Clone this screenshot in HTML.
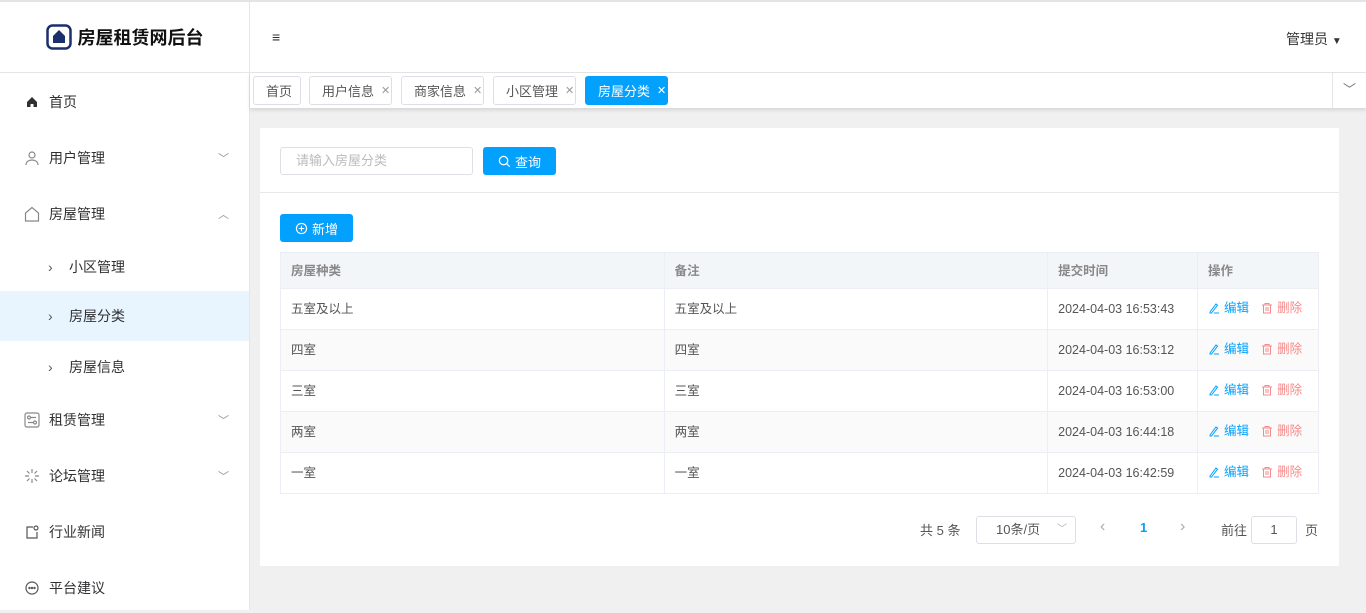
<!DOCTYPE html>
<html><head><meta charset="utf-8"><style>
*{box-sizing:border-box;margin:0;padding:0}
body{width:1366px;height:610px;overflow:hidden;background:#f0f0f0;font-family:"Liberation Sans","Noto Sans CJK SC",sans-serif;font-size:13px;color:#333;position:relative}
.abs{position:absolute}
#top{left:0;top:0;width:1366px;height:2px;background:#e4e4e4}
#side{left:0;top:2px;width:250px;height:608px;background:#fff;border-right:1px solid #e6e6e6}
#logo{left:0;top:2px;width:249px;height:71px;border-bottom:1px solid #e6e6e6;display:flex;align-items:center;justify-content:center;font-size:18px;font-weight:bold;color:#111}
.mi{position:absolute;left:0;width:249px;height:50px;display:flex;align-items:center;font-size:14px;color:#303133}
.mi .ic{position:absolute;left:24px;width:16px;height:16px}
.mi .t{position:absolute;left:49px}
.mi .ar{position:absolute;left:218px;font-size:11px;color:#909399}
.sub .t{left:69px}
.sub .ch{position:absolute;left:48px;color:#555}
#hdr{left:250px;top:2px;width:1116px;height:71px;background:#fff;border-bottom:1px solid #e6e6e6}
#tags{left:250px;top:73px;width:1116px;height:35px;background:#fff;box-shadow:0 2px 4px rgba(0,0,0,.12)}
.tag{position:absolute;top:3px;height:29px;width:83px;border:1px solid #dcdfe6;border-radius:3px;font-size:13px;color:#555;display:flex;align-items:center;padding:0 0 0 12px}
.tag .x{margin-left:7px;font-size:11px;color:#999}
.tag.on{background:#03a1fe;border-color:#03a1fe;color:#fff}
.tag.on .x{color:#fff}
#card{left:260px;top:128px;width:1079px;height:438px;background:#fff}
.btn{position:absolute;background:#03a1fe;color:#fff;border-radius:3px;display:flex;align-items:center;justify-content:center;font-size:13px}
table{position:absolute;left:20px;top:124px;width:1039px;border-collapse:collapse;font-size:12.5px}
td,th{border:1px solid #ebeef5;height:41px;padding-left:10px;text-align:left;color:#555;font-weight:normal;vertical-align:middle;line-height:16px}
th{background:#f3f6f9;color:#888;font-weight:bold;height:36px}
tr:nth-child(odd) td{background:#fafafa}
.ed{color:#03a1fe;display:inline-flex;align-items:center;gap:4px}.de{color:#f78989;margin-left:12px;display:inline-flex;align-items:center;gap:4px}
</style></head><body>
<div class="abs" id="top"></div>
<div class="abs" id="side"></div>
<div class="abs" id="logo"><svg width="26" height="26" viewBox="0 0 26 26" style="margin-right:6px"><rect x="1.5" y="1.5" width="23" height="23" rx="5" fill="none" stroke="#1a2f6b" stroke-width="2.5"/><path d="M13 6 L19 12 V19 H7 V12 Z" fill="#1a2f6b"/></svg>房屋租赁网后台</div>
<div class="mi" style="top:77px"><svg class="ic" viewBox="0 0 16 16"><path d="M8 3L3 8v5h3.5v-3h3v3H13V8z" fill="#303133"/></svg><span class="t">首页</span></div>
<div class="mi" style="top:133px"><svg class="ic" viewBox="0 0 16 16" fill="none" stroke="#888" stroke-width="1.2"><circle cx="8" cy="5" r="3"/><path d="M2 15c0-3.5 3-5 6-5s6 1.5 6 5"/></svg><span class="t">用户管理</span><span class="ar">﹀</span></div>
<div class="mi" style="top:189px"><svg class="ic" viewBox="0 0 16 16" fill="none" stroke="#888" stroke-width="1.2"><path d="M8 1.5L1.5 7v8h13V7z"/></svg><span class="t">房屋管理</span><span class="ar">︿</span></div>
<div class="mi sub" style="top:242px"><span class="ch">›</span><span class="t">小区管理</span></div>
<div class="mi sub" style="top:291px;background:#e8f4fe"><span class="ch">›</span><span class="t">房屋分类</span></div>
<div class="mi sub" style="top:342px"><span class="ch">›</span><span class="t">房屋信息</span></div>
<div class="mi" style="top:395px"><svg class="ic" viewBox="0 0 16 16" fill="none" stroke="#888" stroke-width="1.2"><rect x="1" y="1" width="14" height="14" rx="2"/><circle cx="5" cy="5.5" r="1.5"/><path d="M7 5.5h5M4 10.5h5"/><circle cx="11" cy="10.5" r="1.5"/></svg><span class="t">租赁管理</span><span class="ar">﹀</span></div>
<div class="mi" style="top:451px"><svg class="ic" viewBox="0 0 16 16" stroke="#888" stroke-width="1.2"><path d="M8 1v4M8 11v4M1 8h4M11 8h4M3 3l2.5 2.5M10.5 10.5L13 13M13 3l-2.5 2.5M5.5 10.5L3 13"/></svg><span class="t">论坛管理</span><span class="ar">﹀</span></div>
<div class="mi" style="top:507px"><svg class="ic" viewBox="0 0 16 16" fill="none" stroke="#555" stroke-width="1.2"><path d="M9 3H3v11h10V8"/><circle cx="12" cy="4" r="2"/></svg><span class="t">行业新闻</span></div>
<div class="mi" style="top:563px"><svg class="ic" viewBox="0 0 16 16" fill="none" stroke="#555" stroke-width="1.2"><circle cx="8" cy="8" r="6"/><circle cx="5.5" cy="8" r=".6" fill="#555"/><circle cx="8" cy="8" r=".6" fill="#555"/><circle cx="10.5" cy="8" r=".6" fill="#555"/></svg><span class="t">平台建议</span></div>
<div class="abs" id="hdr"><span style="position:absolute;left:22px;top:27px;font-size:14px;font-weight:bold">≡</span><span style="position:absolute;left:1036px;top:27px;font-size:14px;color:#333">管理员 <span style="font-size:10px">▼</span></span></div>
<div class="abs" id="tags">
<div class="tag" style="left:3px;width:48px">首页</div>
<div class="tag" style="left:59px">用户信息<span class="x">✕</span></div>
<div class="tag" style="left:151px">商家信息<span class="x">✕</span></div>
<div class="tag" style="left:243px">小区管理<span class="x">✕</span></div>
<div class="tag on" style="left:335px">房屋分类<span class="x">✕</span></div>
<div style="position:absolute;left:1082px;top:0;width:34px;height:35px;border-left:1px solid #e6e6e6;text-align:center;line-height:33px;color:#777">﹀</div>
</div>
<div class="abs" id="card">
<div style="position:absolute;left:20px;top:19px;width:193px;height:28px;border:1px solid #dcdfe6;border-radius:3px;padding-left:15px;line-height:26px;color:#bbb;font-size:13px">请输入房屋分类</div>
<div class="btn" style="left:223px;top:19px;width:73px;height:28px"><svg width="13" height="13" viewBox="0 0 14 14" fill="none" stroke="#fff" stroke-width="1.4" style="margin-right:4px"><circle cx="6" cy="6" r="4.5"/><path d="M9.5 9.5L12.5 12.5"/></svg>查询</div>
<div style="position:absolute;left:0;top:64px;width:1079px;height:1px;background:#e8e8e8"></div>
<div class="btn" style="left:20px;top:86px;width:73px;height:28px"><svg width="13" height="13" viewBox="0 0 14 14" fill="none" stroke="#fff" stroke-width="1.2" style="margin-right:4px"><circle cx="7" cy="7" r="5.5"/><path d="M7 4v6M4 7h6"/></svg>新增</div>
<table>
<colgroup><col style="width:384px"><col style="width:384px"><col style="width:150px"><col style="width:121px"></colgroup>
<tr><th>房屋种类</th><th>备注</th><th>提交时间</th><th>操作</th></tr>
<tr><td>五室及以上</td><td>五室及以上</td><td>2024-04-03 16:53:43</td><td><span class="ed"><svg width="12" height="12" viewBox="0 0 12 12" fill="none" stroke="#03a1fe"><path d="M2 10L8 2l1.5 1.2L3.5 11H2zM6 11h5"/></svg>编辑</span><span class="de"><svg width="12" height="12" viewBox="0 0 12 12" fill="none" stroke="#f78989"><path d="M1 3h10M4 3V1.5h4V3M2.5 3v8h7V3M5 5v4M7 5v4"/></svg>删除</span></td></tr>
<tr><td>四室</td><td>四室</td><td>2024-04-03 16:53:12</td><td><span class="ed"><svg width="12" height="12" viewBox="0 0 12 12" fill="none" stroke="#03a1fe"><path d="M2 10L8 2l1.5 1.2L3.5 11H2zM6 11h5"/></svg>编辑</span><span class="de"><svg width="12" height="12" viewBox="0 0 12 12" fill="none" stroke="#f78989"><path d="M1 3h10M4 3V1.5h4V3M2.5 3v8h7V3M5 5v4M7 5v4"/></svg>删除</span></td></tr>
<tr><td>三室</td><td>三室</td><td>2024-04-03 16:53:00</td><td><span class="ed"><svg width="12" height="12" viewBox="0 0 12 12" fill="none" stroke="#03a1fe"><path d="M2 10L8 2l1.5 1.2L3.5 11H2zM6 11h5"/></svg>编辑</span><span class="de"><svg width="12" height="12" viewBox="0 0 12 12" fill="none" stroke="#f78989"><path d="M1 3h10M4 3V1.5h4V3M2.5 3v8h7V3M5 5v4M7 5v4"/></svg>删除</span></td></tr>
<tr><td>两室</td><td>两室</td><td>2024-04-03 16:44:18</td><td><span class="ed"><svg width="12" height="12" viewBox="0 0 12 12" fill="none" stroke="#03a1fe"><path d="M2 10L8 2l1.5 1.2L3.5 11H2zM6 11h5"/></svg>编辑</span><span class="de"><svg width="12" height="12" viewBox="0 0 12 12" fill="none" stroke="#f78989"><path d="M1 3h10M4 3V1.5h4V3M2.5 3v8h7V3M5 5v4M7 5v4"/></svg>删除</span></td></tr>
<tr><td>一室</td><td>一室</td><td>2024-04-03 16:42:59</td><td><span class="ed"><svg width="12" height="12" viewBox="0 0 12 12" fill="none" stroke="#03a1fe"><path d="M2 10L8 2l1.5 1.2L3.5 11H2zM6 11h5"/></svg>编辑</span><span class="de"><svg width="12" height="12" viewBox="0 0 12 12" fill="none" stroke="#f78989"><path d="M1 3h10M4 3V1.5h4V3M2.5 3v8h7V3M5 5v4M7 5v4"/></svg>删除</span></td></tr>
</table>
<span style="position:absolute;left:660px;top:392px;color:#555">共 5 条</span>
<div style="position:absolute;left:716px;top:388px;width:100px;height:28px;border:1px solid #dcdfe6;border-radius:3px;line-height:26px;padding-left:19px;color:#555">10条/页<span style="position:absolute;right:8px;color:#aaa;font-size:10px">﹀</span></div>
<span style="position:absolute;left:840px;top:390px;color:#aaa;font-size:16px">‹</span>
<span style="position:absolute;left:880px;top:392px;color:#03a1fe;font-weight:bold">1</span>
<span style="position:absolute;left:920px;top:390px;color:#aaa;font-size:16px">›</span>
<span style="position:absolute;left:961px;top:392px;color:#555">前往</span>
<div style="position:absolute;left:991px;top:388px;width:46px;height:28px;border:1px solid #dcdfe6;border-radius:3px;text-align:center;line-height:26px;color:#555">1</div>
<span style="position:absolute;left:1045px;top:392px;color:#555">页</span>
</div>
</body></html>
